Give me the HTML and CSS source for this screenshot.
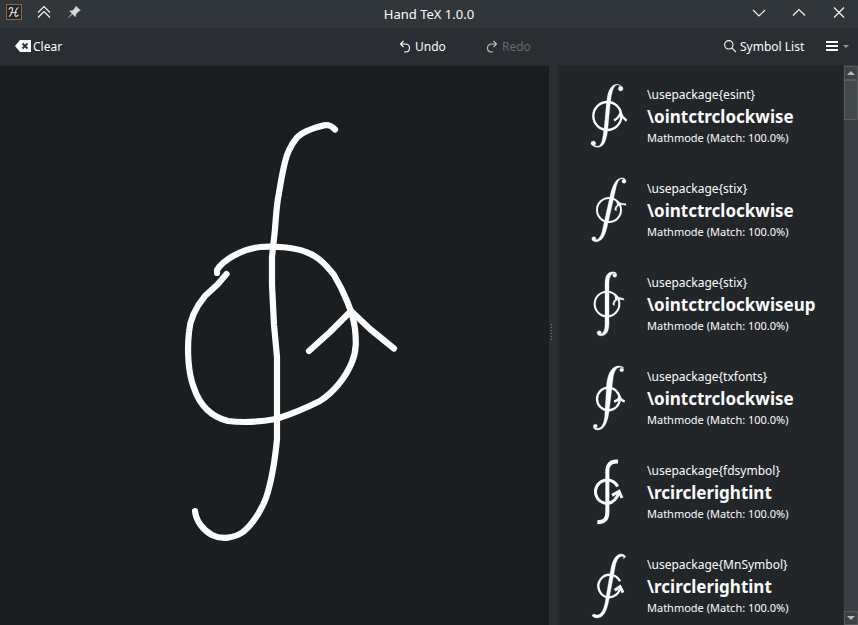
FILE: index.html
```
<!DOCTYPE html>
<html lang="en">
<head>
<meta charset="utf-8">
<title>Hand TeX 1.0.0</title>
<link rel="stylesheet" href="styles.css">
</head>
<body>
<div class="window">
  <header class="titlebar">
    <div class="title-left">
      <svg width="90" height="28" viewBox="0 0 90 28" fill="none">
        <rect x="6.500" y="4.500" width="15" height="15" fill="#23282b" stroke="#95623f"/>
        <path d="M9 9.500C9.500 7.500 12 7 12.500 8.500C13 10 11 15.500 9 16.500M10.500 12.500H17M18.500 7.500C16.500 8 15 12 15 15C15 17 17 16.500 18.500 15" stroke="#d8dadb" stroke-width="1.200"/>
        <path d="M38 12.500L44 6.500L50 12.500M38 17.500L44 11.500L50 17.500" stroke="#f4f5f5" stroke-width="1.200"/>
        <path d="M76 6L80.500 10.500L78.500 11.500L76 14L75.500 17L72.500 14L68 18L72 13.500L69.500 11L72.500 10.500L75 8Z" fill="#d5d7d8" stroke="#d5d7d8" stroke-width=".3"/>
      </svg>
    </div>
    <h1>Hand TeX 1.0.0</h1>
    <div class="title-right">
      <svg width="108" height="28" viewBox="750 0 108 28" fill="none" stroke="#f4f5f5" stroke-width="1.200">
        <path d="M753 10L759 16L765 10M793 15.500L799 9.500L805 15.500M834 7.500L844 17.500M844 7.500L834 17.500"/>
      </svg>
    </div>
  </header>
  <nav class="toolbar">
    <button class="tool clear">
      <svg width="16" height="12" viewBox="0 0 16 12"><path d="M0 6L5 0H16V12H5Z" fill="#fcfcfc"/><path d="M7.500 3.500L12.500 8.500M12.500 3.500L7.500 8.500" stroke="#2a2e32" stroke-width="1.800"/></svg>
      <span>Clear</span>
    </button>
    <button class="tool undo">
      <svg width="12" height="14" viewBox="0 0 12 14" fill="none" stroke="#fcfcfc" stroke-width="1.100"><path d="M4.500 1L1.500 4L4.500 7M1.500 4H6C9 4 10.500 5.700 10.500 8C10.500 10.500 9 12 6.500 12H5"/></svg>
      <span>Undo</span>
    </button>
    <button class="tool redo" disabled>
      <svg width="12" height="14" viewBox="0 0 12 14" fill="none" stroke="#c3c5c7" stroke-width="1.100"><path d="M7.500 1L10.500 4L7.500 7M10.500 4H6C3 4 1.500 5.700 1.500 8C1.500 10.500 3 12 5.500 12H7"/></svg>
      <span>Redo</span>
    </button>
    <button class="tool symbols">
      <svg width="12" height="13" viewBox="0 0 12 13" fill="none" stroke="#fcfcfc" stroke-width="1.100"><circle cx="4.800" cy="4.800" r="4.200"/><path d="M7.800 7.800L12 12"/></svg>
      <span>Symbol List</span>
    </button>
    <button class="tool menu">
      <svg width="24" height="12" viewBox="0 0 24 12"><path d="M0 0H12V2H0ZM0 4H12V6H0ZM0 8H12V10H0Z" fill="#fcfcfc"/><path d="M17 4H23L20 7Z" fill="#929597"/></svg>
    </button>
  </nav>
  <main class="content">
    <section class="canvas">
      <svg width="549" height="559" viewBox="0 66 549 559" fill="none" stroke="#fcfcfc" stroke-width="6.200" stroke-linecap="round" stroke-linejoin="round">
        <path d="M335 129.500C333 127 330 125 325.500 125C317 127 303 131 297 137.500C291 145 287 153 285 162C282 174 281 181 279 193C276 207 276 220 274.500 234L272 257V285L274 325L277 357V439C275 460 271 483 266 498C261 511 252 525 243 532C234 538 222 540 212 535C203 530 196 521 195 511"/>
        <path d="M226.500 274L218 284L205 296C196 307 190 318 189 332C187 350 188 373 194 388C200 406 212 417 228 421C243 423 259 422 276 419C292 414 306 408 320 401C334 392 346 377 352 362C357 350 356 339 355 329C353 312 343 290 334 275C326 265 318 256 306 252C294 247 273 246 260 247C242 249 223 260 217 270V273"/>
        <path d="M309 351L330 332L351 311L370 329L394 348.500"/>
      </svg>
    </section>
    <div class="splitter"><svg width="3" height="17" viewBox="0 0 3 17"><path d="M1.500 0V17" stroke="#777b7e" stroke-dasharray="1 2"/></svg></div>
    <section class="results">
      <article class="result">
        <svg class="glyph" viewBox="0 0 180 240"><path class="stem" d="M118 28C112 24 105 27 100 38C94 52 92 70 87 120C83 165 82 180 75 197C68 213 54 218 40 211L44 208C54 214 62 210 66 195C71 175 73 150 76 120C81 70 81 58 88 43C96 25 110 20 124 30Z"/><circle cx="122" cy="38" r="7" class="stem"/><circle cx="40" cy="202" r="7" class="stem"/><circle class="line" cx="82" cy="120" r="42"/><path class="line" d="M102 133Q116 126 121 112Q127 125 140 134"/></svg>
        <div class="info"><p>\usepackage{esint}</p><h2>\ointctrclockwise</h2><small>Mathmode (Match: 100.0%)</small></div>
      </article>
      <article class="result">
        <svg class="glyph" viewBox="0 0 180 240"><path class="stem" d="M130 27C119 23 113 34 109 49L84 160C78 188 71 211 52 215C42 217 35 211 36 203L42 209C51 213 61 204 66 186L90 79C97 48 106 27 123 24Q132 22 137 29Z"/><circle cx="132" cy="34" r="6" class="stem"/><circle cx="42" cy="206" r="6" class="stem"/><circle class="line thin" cx="87" cy="120" r="36"/><path class="stem" d="M109 92Q122 102 138 101V106Q127 102 118 106Q108 109 109 123L104 119Q105 109 112 104Z"/></svg>
        <div class="info"><p>\usepackage{stix}</p><h2>\ointctrclockwise</h2><small>Mathmode (Match: 100.0%)</small></div>
      </article>
      <article class="result">
        <svg class="glyph" viewBox="0 0 180 240"><path class="stem" d="M105 27C94 26 88 38 87 55V178C87 202 80 213 66 215C58 217 50 212 51 204L59 210C69 211 75 199 75 182V59C75 38 82 25 95 24Q106 22 111 30Z"/><circle cx="104" cy="34" r="6" class="stem"/><circle cx="58" cy="206" r="6" class="stem"/><circle class="line thin" cx="81" cy="120" r="37"/><path class="stem" d="M104 92Q117 102 132 104V108Q121 105 112 108Q102 111 103 125L98 121Q99 111 106 106Z"/></svg>
        <div class="info"><p>\usepackage{stix}</p><h2>\ointctrclockwiseup</h2><small>Mathmode (Match: 100.0%)</small></div>
      </article>
      <article class="result">
        <svg class="glyph" viewBox="0 0 180 240"><path class="stem" d="M126 29C112 23 102 37 99 62L87 162C83 192 73 215 54 216Q43 217 39 207L47 209C62 216 71 201 74 177L80 79C83 45 97 24 116 24Q127 23 132 31Z"/><ellipse cx="125" cy="36" rx="6" ry="5" class="stem"/><ellipse cx="46" cy="204" rx="6" ry="5" class="stem"/><circle class="line" cx="85" cy="123" r="34"/><path class="line" d="M102 131Q114 128 119 118Q124 127 134 131"/></svg>
        <div class="info"><p>\usepackage{txfonts}</p><h2>\ointctrclockwise</h2><small>Mathmode (Match: 100.0%)</small></div>
      </article>
      <article class="result">
        <svg class="glyph" viewBox="0 0 180 240"><path class="line heavy" d="M114 29C91 27 82 39 82 58V181C82 202 73 211 52 211"/><path class="line thick" d="M113 104A35 35 0 1 0 86 154Q105 150 116 125"/><path class="line thick" d="M96 130L117 118L126 138"/></svg>
        <div class="info"><p>\usepackage{fdsymbol}</p><h2>\rcirclerightint</h2><small>Mathmode (Match: 100.0%)</small></div>
      </article>
      <article class="result">
        <svg class="glyph" viewBox="0 0 180 240"><path class="stem" d="M130 31C117 29 109 42 105 65L86 166C80 196 70 216 51 216Q39 216 36 208L42 204C59 214 69 198 75 172L92 72C97 44 107 24 124 24Q134 25 137 32L131 38Z"/><path class="line" d="M120 106A34 34 0 1 0 85 154Q110 154 120 130"/><path class="line thick" d="M104 133L120 122L129 140"/></svg>
        <div class="info"><p>\usepackage{MnSymbol}</p><h2>\rcirclerightint</h2><small>Mathmode (Match: 100.0%)</small></div>
      </article>
    </section>
    <aside class="scrollbar">
      <div class="arrow"><svg width="8" height="4"><path d="M0 4L4 0L8 4Z" fill="#b5b7b9"/></svg></div>
      <div class="thumb"></div>
      <div class="track"></div>
      <div class="arrow"><svg width="8" height="4"><path d="M0 0L4 4L8 0Z" fill="#b5b7b9"/></svg></div>
    </aside>
  </main>
</div>
</body>
</html>
```
FILE: styles.css
```
* { box-sizing: border-box; }
body { margin: 0; background: #2a2e32; color: #fcfcfc; font-family: "Noto Sans", sans-serif; font-size: 13px; }
.window { width: 858px; height: 625px; display: flex; flex-direction: column; overflow: hidden; }
.titlebar { height: 28px; flex: none; display: grid; grid-template-columns: 108px 1fr 108px; background: #31363b; }
.titlebar svg { display: block; }
.titlebar h1 { margin: 0; font-size: 13px; font-weight: 400; line-height: 28px; text-align: center; }
.toolbar { height: 37px; flex: none; display: flex; align-items: center; padding-left: 15px; background: #2a2e32; }
.tool { display: flex; align-items: center; height: 37px; padding: 0; border: 0; background: none; color: #fcfcfc; font: 12px/18px "Noto Sans", sans-serif; white-space: nowrap; text-align: left; }
.tool svg { flex: none; }
.clear { width: 384px; gap: 2px; }
.clear svg { margin-top: -1px; }
.undo { width: 87px; gap: 4px; }
.redo { width: 238px; gap: 4px; color: #656a6e; }
.symbols { width: 102px; gap: 4px; }
.content { flex: 1; min-height: 0; display: flex; }
.canvas { width: 549px; margin-top: 1px; background: #1b1e20; overflow: hidden; }
.canvas svg { display: block; }
.splitter { width: 9px; display: flex; align-items: center; padding: 0 1px; background: #2a2e32; }
.splitter svg { margin-top: -26px; }
.results { width: 285px; padding-top: 5px; background: #232629; overflow: hidden; }
.result { height: 94px; display: flex; padding: 6px 0 0 22px; }
.glyph { width: 60px; height: 80px; flex: none; overflow: visible; }
.stem { fill: #fcfcfc; stroke: #fcfcfc; stroke-width: 1; }
.line { fill: none; stroke: #fcfcfc; stroke-width: 7; }
.thin { stroke-width: 6; }
.thick { stroke-width: 9; }
.heavy { stroke-width: 12; }
.info { padding: 9px 0 0 7px; white-space: nowrap; }
.info p { margin: 0; font-size: 12px; line-height: 19px; }
.info h2 { margin: 0; padding-top: 1px; font-size: 17px; line-height: 24px; font-weight: 700; }
.info small { display: block; margin-top: -1px; font-size: 11px; line-height: 19px; }
.scrollbar { width: 14px; margin-left: 1px; padding-top: 1px; display: flex; flex-direction: column; background: #3a3d42; }
.arrow { height: 14px; flex: none; display: flex; align-items: center; justify-content: center; background: #3c4145; border: 1px solid #54585b; }
.thumb { height: 40px; flex: none; background: #43484c; border: 1px solid #5c6063; }
.track { flex: 1; background: #3a3d42; }
```
